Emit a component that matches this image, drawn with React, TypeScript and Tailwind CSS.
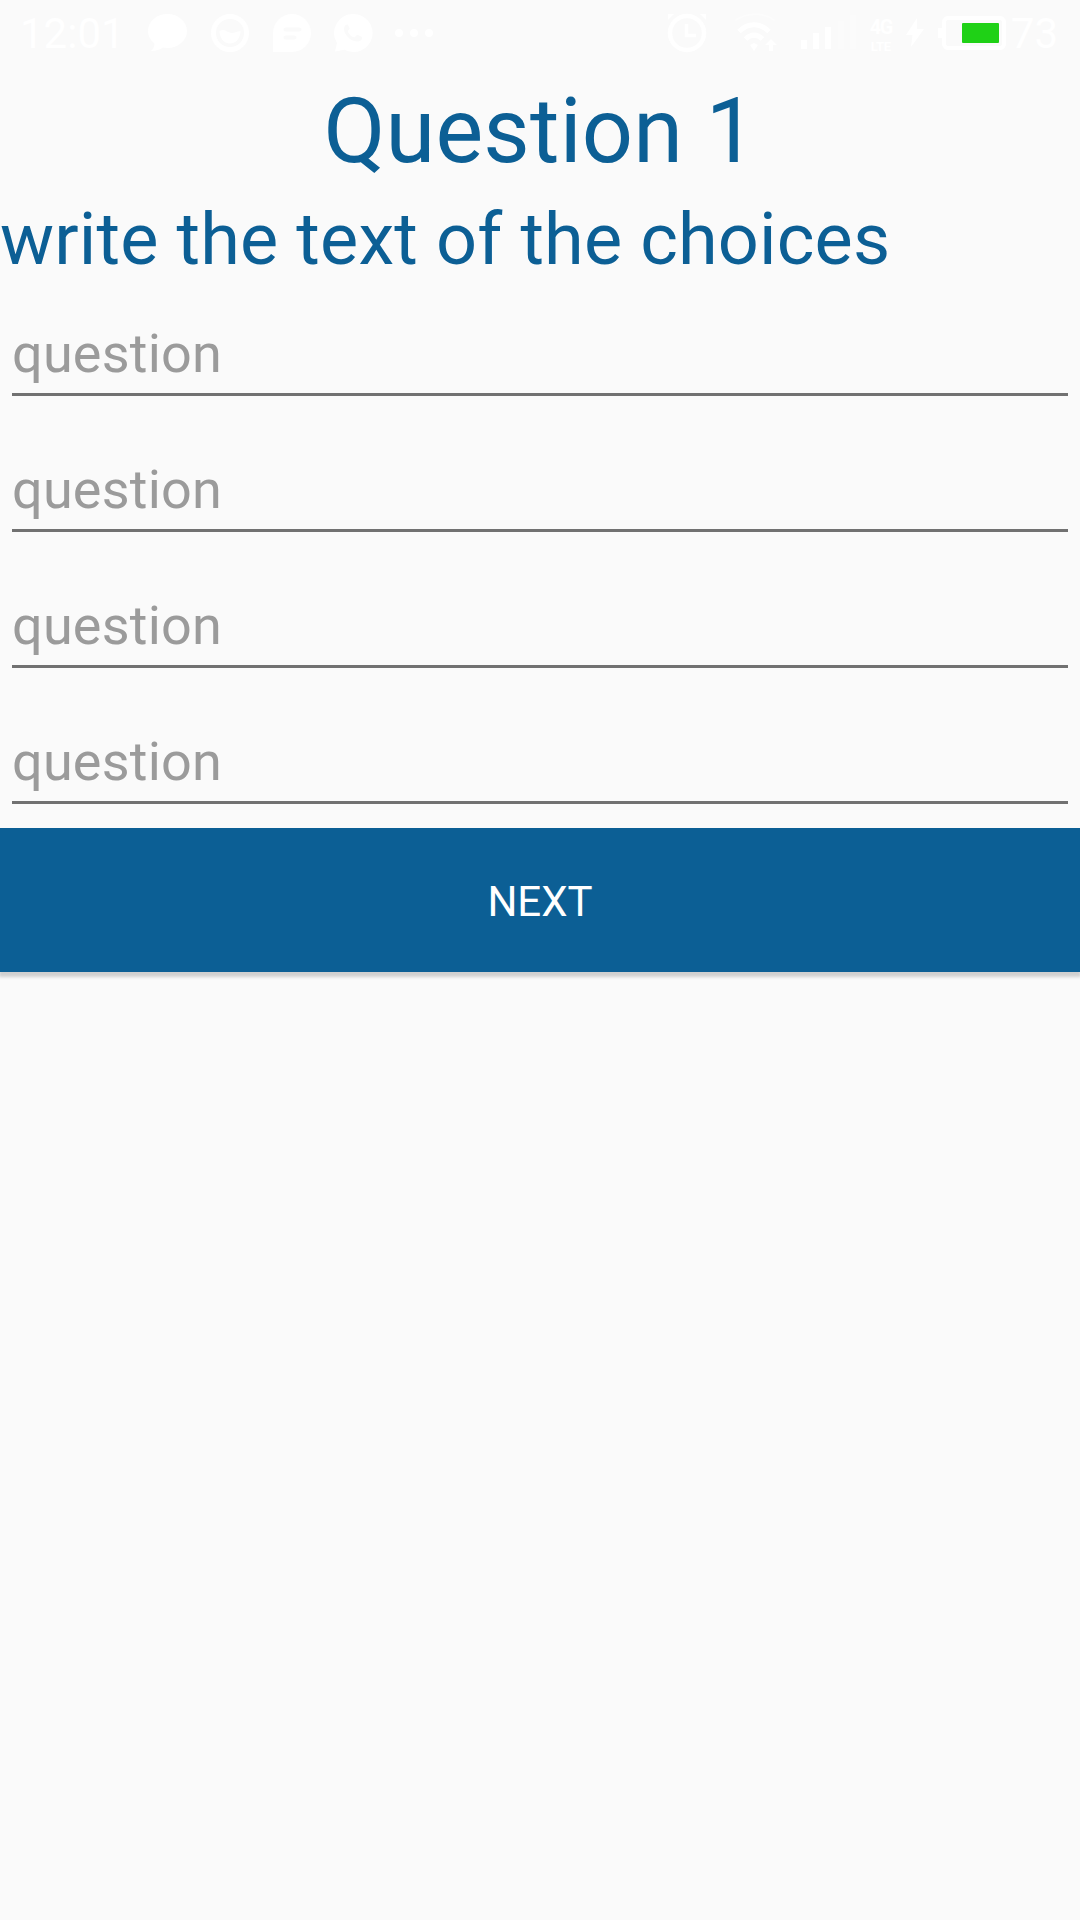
import React from "react";

function ChatBubbleIcon() {
  return (
    <svg className="ml-[26px] h-10 w-10" viewBox="0 0 40 40" fill="#fff">
      <path d="M20.500 1C9.500 1 1 8.500 1 18c0 5 2.500 9.500 6.500 12.500C7.500 34 6 36 4 38c5 0 9-1.300 12-3.500 1.500.300 3 .500 4.500.500C31 35 40 27.500 40 18S31 1 20.500 1Z" />
    </svg>
  );
}

function RingIcon() {
  return (
    <svg className="ml-[23px] h-10 w-10" viewBox="0 0 40 40" fill="none">
      <circle cx="20" cy="20" r="16.500" stroke="#fff" strokeWidth="5" />
      <path d="M9.500 18c3-1.500 5-1 7.500.500 2.500 1.300 5 1.800 8 1 2-.500 3.500-1.500 5.500-1.500 0 7-4.500 12.500-10.500 12.500S9.500 25 9.500 18Z" fill="#fff" />
    </svg>
  );
}

function MessageIcon() {
  return (
    <svg className="ml-[22px] h-10 w-10" viewBox="0 0 40 40">
      <path d="M20 1a19 19 0 1 1 0 38H1V20A19 19 0 0 1 20 1Z" fill="#fff" />
      <path d="M13.500 16.500h14M13.500 24.500h9" stroke="#fafafa" strokeWidth="4" strokeLinecap="round" />
    </svg>
  );
}

function PhoneBubbleIcon() {
  return (
    <svg className="ml-[21px] h-10 w-10" viewBox="0 0 40 40">
      <path d="M20.500 1a19 19 0 1 1-9 35.700L2 38.500 4 30A19 19 0 0 1 20.500 1Z" fill="#fff" />
      <path
        d="M14.500 11.500c-2 0-3.500 2-3.500 4.500C11 22 18 28.500 24.500 28.500c2.500 0 4.500-1.500 4.500-3.500 0-.700-.300-1-1-1.400l-3-1.500c-.800-.300-1.200-.200-1.700.400l-1.300 1.600c-.300.400-.800.400-1.300.200-2.500-1.200-4.500-3-5.700-5.400-.300-.500-.200-.900.200-1.300l1.100-1.300c.400-.500.400-.900.200-1.400l-1.300-2.700c-.200-.500-.300-.700-.700-.700Z"
        fill="#fafafa"
      />
    </svg>
  );
}

function MoreIcon() {
  return (
    <svg className="ml-[21px] h-10 w-10" viewBox="0 0 40 40" fill="#fff">
      <circle cx="5" cy="20" r="4" />
      <circle cx="20" cy="20" r="4" />
      <circle cx="35" cy="20" r="4" />
    </svg>
  );
}

function AlarmIcon() {
  return (
    <svg className="h-10 w-10" viewBox="0 0 40 40" fill="none" stroke="#fff">
      <circle cx="20" cy="20" r="17" strokeWidth="4.500" />
      <path d="M19.500 11v11.500H29" strokeWidth="3.500" />
      <path d="M1 7V1h6ZM33 1h6v6Z" fill="#fff" stroke="none" />
    </svg>
  );
}

function WifiIcon() {
  return (
    <svg className="ml-[26px] h-10 w-12" viewBox="0 0 48 40" fill="none" stroke="#fff">
      <path d="M2 7.500c12-8.500 28-8.500 40 0" strokeWidth="2" opacity=".35" />
      <path d="M6 18.500c9-9 21-9 30 0M12.500 26c5.500-5 11.500-5 17 0" strokeWidth="5" />
      <path d="m17 32 4-2 4 2-4 6Z" fill="#fff" stroke="none" />
      <path d="m38 26 6 6h-4v6h-4v-6h-4Z" fill="#fff" stroke="none" />
    </svg>
  );
}

function SignalIcon() {
  return (
    <svg className="ml-[20px] h-10 w-14" viewBox="0 0 56 40" fill="#fff">
      <path d="M0 27h6v9H0ZM12 20h6v16h-6ZM24 14h6v22h-6Z" />
      <path d="M37 8h6v28h-6ZM49 2h6v34h-6Z" opacity=".3" />
    </svg>
  );
}

function BoltIcon() {
  return (
    <svg className="ml-3 h-10 w-5" viewBox="0 0 20 40" fill="#fff">
      <path d="M12 5 1 22h6.500L6 34l13-18h-7Z" />
    </svg>
  );
}

function BatteryIcon() {
  return (
    <svg className="ml-[13px] h-10 w-[68px]" viewBox="0 0 68 40" fill="none">
      <path d="M0 15h4v10H0Z" fill="#fff" />
      <rect x="6" y="5" width="60" height="30" rx="4" stroke="#fff" strokeWidth="4" />
      <rect x="24" y="10" width="37" height="20" rx="1" fill="#1fd116" />
    </svg>
  );
}

function StatusBar() {
  return (
    <header className="flex h-[66px] items-center justify-between pr-[22px] pl-[21px] text-[42px] leading-none text-white">
      <div className="flex items-center">
        <span className="-ml-px w-[101px] pt-px whitespace-nowrap">12:01</span>
        <ChatBubbleIcon />
        <RingIcon />
        <MessageIcon />
        <PhoneBubbleIcon />
        <MoreIcon />
      </div>
      <div className="flex items-center">
        <AlarmIcon />
        <WifiIcon />
        <SignalIcon />
        <div className="ml-3 flex w-6 flex-col items-center pt-[4px] font-bold">
          <span className="text-[20px] leading-[23px] tracking-[-1.5px]">4G</span>
          <span className="text-[13px] leading-[16px] tracking-[-0.3px]">LTE</span>
        </div>
        <BoltIcon />
        <BatteryIcon />
        <span className="ml-[5px] pt-px">73</span>
      </div>
    </header>
  );
}

function ChoiceField() {
  return (
    <div className="h-[136px] px-3 pt-[37px]">
      <input
        type="text"
        placeholder="question"
        className="block h-[75px] w-full border-b-[3px] border-[#717171] bg-transparent pb-[8px] text-[54px] leading-[64px] tracking-[0.2px] text-[#717171] outline-none placeholder:text-[#9b9b9b] placeholder:opacity-100"
      />
    </div>
  );
}

export default function App() {
  return (
    <div className="flex h-[1920px] w-[1080px] flex-col overflow-hidden bg-[#fafafa] font-['Roboto',sans-serif]">
      <StatusBar />
      <main className="flex flex-col pt-[6px]">
        <h1 className="h-[120px] text-center text-[90px] leading-[120px] tracking-[0.2px] text-[#0c5f95]">
          Question 1
        </h1>
        <h2 className="h-[92px] text-[72px] leading-[95px] tracking-[0.15px] whitespace-nowrap text-[#0c5f95]">
          write the text of the choices
        </h2>
        <form className="flex flex-col">
          <ChoiceField />
          <ChoiceField />
          <ChoiceField />
          <ChoiceField />
          <button
            type="button"
            className="h-36 w-full bg-[#0c5f95] pt-[2px] text-[42px] text-white shadow-[0_4px_3px_1px_rgba(0,0,0,0.17)]"
          >
            NEXT
          </button>
        </form>
      </main>
    </div>
  );
}
